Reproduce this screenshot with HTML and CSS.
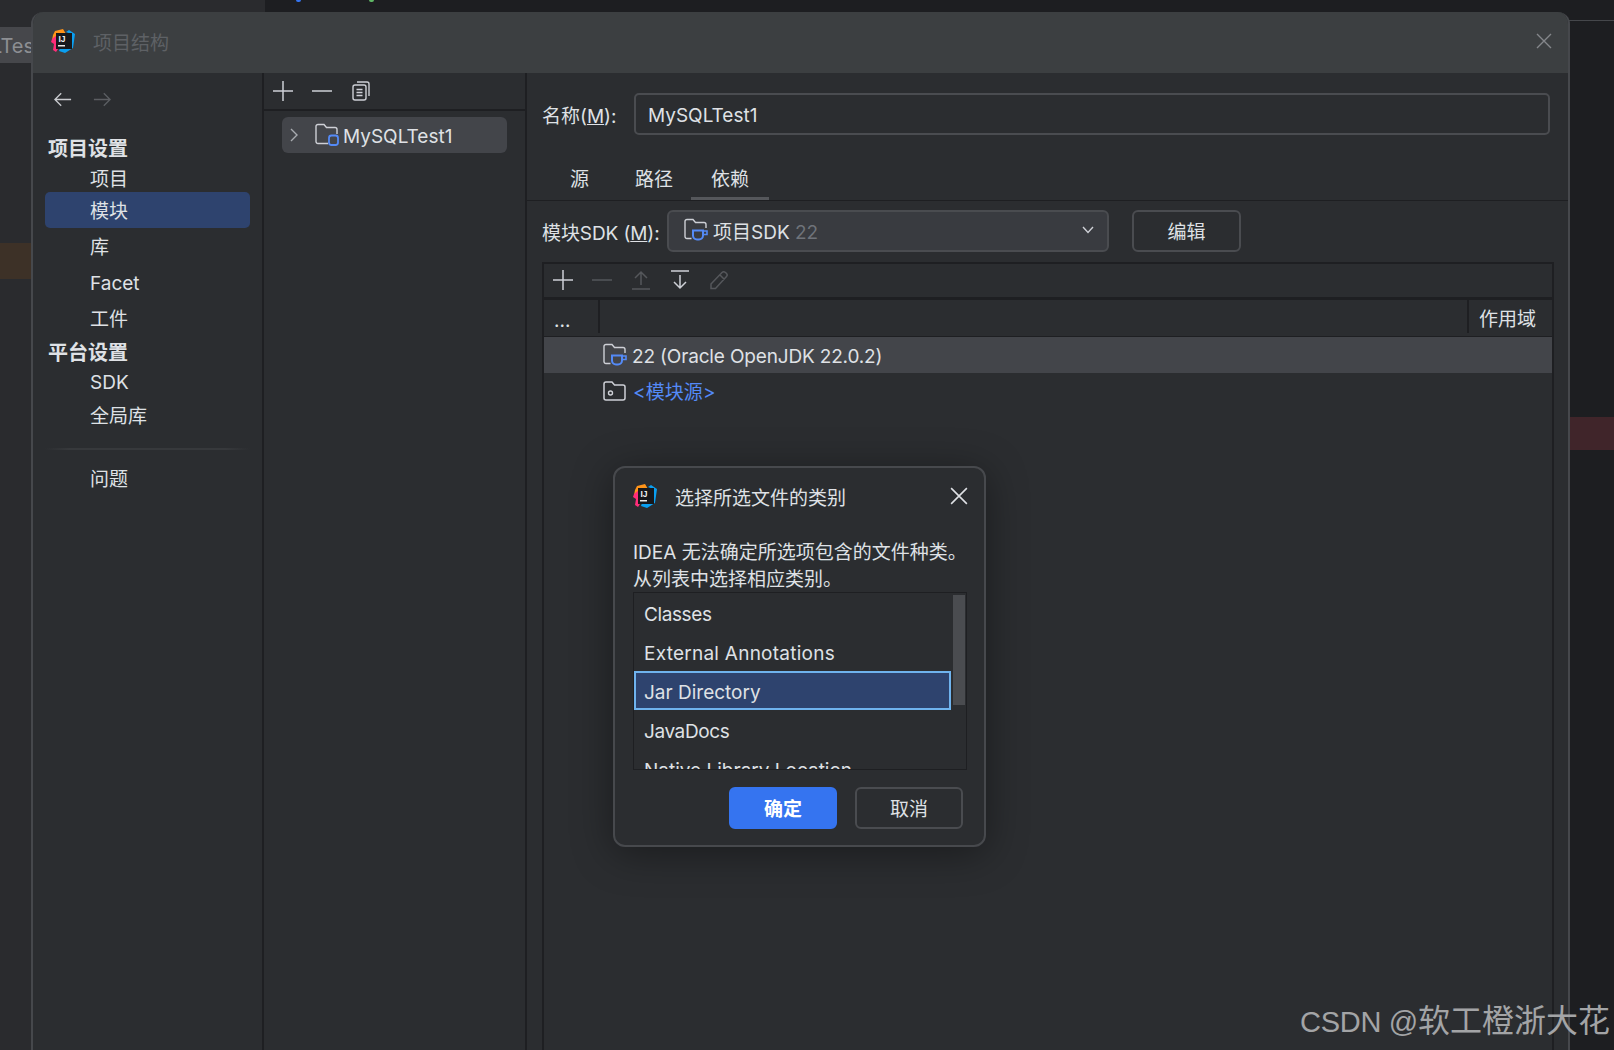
FILE: index.html
```html
<!DOCTYPE html>
<html lang="zh-CN">
<head>
<meta charset="utf-8">
<title>项目结构</title>
<link rel="stylesheet" href="styles.css">
</head>
<body>
<svg class="defs" width="0" height="0" aria-hidden="true">
  <defs>
    <symbol id="logo" viewBox="0 0 24 24">
      <polygon points="4,2 12,0 15,5 5,8 1,11 2,6" fill="#ff9419"/>
      <polygon points="1,10 6,6 7,20 5,23 2,21 3,15 0,13" fill="#ff2d78"/>
      <polygon points="15,3 18,1 24,5 22,19 14,24 8,22 9,19 20,19 20,5" fill="#0a9ff0"/>
      <rect x="5" y="4" width="16" height="16" fill="#17181b"/>
      <rect x="7" y="16" width="7" height="1.500" fill="#e8e8e8"/>
      <text x="7.500" y="12.500" class="logo-text">IJ</text>
    </symbol>
    <symbol id="plus" viewBox="0 0 20 20"><path d="M10 0V20M0 10H20" stroke="currentColor" stroke-width="1.500"/></symbol>
    <symbol id="minus" viewBox="0 0 20 20"><path d="M0 10H20" stroke="currentColor" stroke-width="1.500"/></symbol>
    <symbol id="close" viewBox="0 0 16 16"><path d="M1 1L15 15M15 1L1 15" stroke="currentColor" stroke-width="1.400"/></symbol>
    <symbol id="arrow" viewBox="0 0 20 16"><path d="M1 8H19M8 1L1 8L8 15" fill="none" stroke="currentColor" stroke-width="1.500"/></symbol>
    <symbol id="folder-jdk" viewBox="0 0 24 24">
      <path d="M7.500 20.500H3A2 2 0 0 1 1 18.500V3.500A2 2 0 0 1 3 1.500H9L11.500 4.500H20A2 2 0 0 1 22 6.500V10" fill="none" stroke="#ced0d6" stroke-width="1.400"/>
      <path d="M9 12.500H19V17.500A4 4 0 0 1 15 21.500H13A4 4 0 0 1 9 17.500Z" fill="none" stroke="#548af7" stroke-width="2"/>
      <path d="M19 13H23V16.500H18.500" fill="none" stroke="#548af7" stroke-width="1.600"/>
    </symbol>
  </defs>
</svg>

<div class="backdrop">
  <div class="backdrop-left">
    <div class="editor-tab">LTes</div>
    <div class="warn-bar"></div>
  </div>
  <div class="backdrop-right">
    <div class="backdrop-marks"><i class="mark mark-blue"></i><i class="mark mark-green"></i></div>
    <div class="backdrop-line"></div>
    <div class="error-bar"></div>
  </div>
</div>

<section class="window">
  <header class="titlebar">
    <svg class="logo"><use href="#logo"/></svg>
    <span class="window-title">项目结构</span>
    <svg class="window-close"><use href="#close"/></svg>
  </header>

  <div class="window-body">
    <nav class="nav">
      <div class="nav-history">
        <svg class="arrow"><use href="#arrow"/></svg>
        <svg class="arrow arrow-next"><use href="#arrow"/></svg>
      </div>
      <div class="nav-heading nav-heading-first">项目设置</div>
      <div class="nav-item nav-item-first">项目</div>
      <div class="nav-item nav-item-selected">模块</div>
      <div class="nav-item">库</div>
      <div class="nav-item">Facet</div>
      <div class="nav-item">工件</div>
      <div class="nav-heading">平台设置</div>
      <div class="nav-item nav-item-s">SDK</div>
      <div class="nav-item">全局库</div>
      <div class="nav-sep"></div>
      <div class="nav-item nav-item-last">问题</div>
    </nav>

    <div class="modules">
      <div class="modules-toolbar">
        <svg class="tool-icon"><use href="#plus"/></svg>
        <svg class="tool-icon"><use href="#minus"/></svg>
        <svg class="tool-icon" viewBox="0 0 20 20">
          <rect x="2" y="4" width="13" height="15" rx="2" fill="none" stroke="currentColor" stroke-width="1.400"/>
          <path d="M6 1H16A2 2 0 0 1 18 3V15" fill="none" stroke="currentColor" stroke-width="1.400"/>
          <path d="M5.500 8.500H11.500M5.500 11.500H11.500M5.500 14.500H11.500" stroke="currentColor" stroke-width="1.300"/>
        </svg>
      </div>
      <div class="tree-row">
        <svg class="chevron" viewBox="0 0 8 14"><path d="M1 1L7 7L1 13" fill="none" stroke="currentColor" stroke-width="1.400"/></svg>
        <svg class="folder" viewBox="0 0 24 24">
          <path d="M13 20.500H3A2 2 0 0 1 1 18.500V3.500A2 2 0 0 1 3 1.500H9L11.500 4.500H20A2 2 0 0 1 22 6.500V11" fill="none" stroke="#ced0d6" stroke-width="1.400"/>
          <rect x="14" y="12.500" width="9" height="9.500" rx="2.500" fill="none" stroke="#548af7" stroke-width="1.800"/>
        </svg>
        <span class="tree-label">MySQLTest1</span>
      </div>
    </div>

    <main class="detail">
      <div class="name-row">
        <label class="name-label">名称(<u>M</u>):</label>
        <div class="input">MySQLTest1</div>
      </div>

      <div class="tabs">
        <div class="tab tab-source">源</div>
        <div class="tab tab-paths">路径</div>
        <div class="tab tab-active">依赖</div>
      </div>

      <div class="sdk-row">
        <label class="sdk-label">模块SDK (<u>M</u>):</label>
        <div class="combo">
          <svg class="folder"><use href="#folder-jdk"/></svg>
          <span>项目SDK <span class="muted">22</span></span>
          <svg class="combo-arrow" viewBox="0 0 12 8"><path d="M1 1L6 6.500L11 1" fill="none" stroke="currentColor" stroke-width="1.400"/></svg>
        </div>
        <div class="btn-edit">编辑</div>
      </div>

      <div class="table">
        <div class="table-toolbar">
          <svg class="tool-icon"><use href="#plus"/></svg>
          <svg class="tool-icon tool-off"><use href="#minus"/></svg>
          <svg class="tool-icon tool-off" viewBox="0 0 20 20"><path d="M10 15V2M4 8L10 2L16 8M1 19H19" fill="none" stroke="currentColor" stroke-width="1.500"/></svg>
          <svg class="tool-icon" viewBox="0 0 20 20"><path d="M1 1H19M10 5V18M4 12L10 18L16 12" fill="none" stroke="currentColor" stroke-width="1.500"/></svg>
          <svg class="tool-icon tool-off" viewBox="0 0 20 20"><path d="M2 14L13 2.500Q14.500 1 16.500 2.500L17.500 3.500Q19 5 17.500 6.500L6.500 18.500H2ZM11 5L15.500 9.500" fill="none" stroke="currentColor" stroke-width="1.500"/></svg>
        </div>
        <div class="table-head">
          <div class="col-export">...</div>
          <div class="col-name"></div>
          <div class="col-scope">作用域</div>
        </div>
        <div class="table-row table-row-selected">
          <svg class="folder"><use href="#folder-jdk"/></svg>
          <span class="sdk-name">22 (Oracle OpenJDK 22.0.2)</span>
        </div>
        <div class="table-row">
          <svg class="folder" viewBox="0 0 24 24">
            <path d="M3 21A2 2 0 0 1 1 19V5A2 2 0 0 1 3 3H9L11.500 6H20A2 2 0 0 1 22 8V19A2 2 0 0 1 20 21Z" fill="none" stroke="currentColor" stroke-width="1.500"/>
            <circle cx="7.500" cy="14" r="2" fill="none" stroke="currentColor" stroke-width="1.400"/>
          </svg>
          <span class="link">&lt;模块源&gt;</span>
        </div>
      </div>
    </main>
  </div>
</section>

<section class="modal">
  <header class="modal-title">
    <svg class="modal-logo"><use href="#logo"/></svg>
    <span class="modal-title-text">选择所选文件的类别</span>
    <svg class="modal-close"><use href="#close"/></svg>
  </header>
  <p class="modal-text">IDEA 无法确定所选项包含的文件种类。<br>从列表中选择相应类别。</p>
  <div class="list">
    <div class="list-item track-tight">Classes</div>
    <div class="list-item track-wide">External Annotations</div>
    <div class="list-item list-item-selected">Jar Directory</div>
    <div class="list-item track-tight">JavaDocs</div>
    <div class="list-item">Native Library Location</div>
    <div class="scrollbar"></div>
  </div>
  <footer class="modal-actions">
    <div class="btn btn-primary">确定</div>
    <div class="btn">取消</div>
  </footer>
</section>

<div class="watermark"><span class="watermark-latin">CSDN @</span>软工橙浙大花</div>
</body>
</html>
```

FILE: styles.css
```css
* { box-sizing: border-box; }

html, body {
  margin: 0;
  width: 1614px;
  height: 1050px;
  overflow: hidden;
}

body {
  position: relative;
  background: #1e1f22;
  color: #dfe1e5;
  font-family: Inter, "Noto Sans CJK SC", sans-serif;
  font-size: 19px;
}

.defs { position: absolute; }
.logo-text { font: 700 8.500px "Liberation Sans", sans-serif; fill: #f0f0f0; }

/* backdrop: IDE behind the dialogs */
.backdrop {
  position: absolute;
  inset: 0;
  display: grid;
  grid-template-columns: 265px 1fr;
}
.backdrop-left { background: #2a2b2e; padding-top: 27px; }
.backdrop-right { background: #1d1e21; }
.backdrop-marks { height: 20px; display: flex; align-items: flex-start; padding-left: 31px; }
.mark { width: 5px; height: 2px; border-radius: 0 0 3px 3px; }
.mark-blue { background: #3574f0; }
.mark-green { margin-left: 68px; background: #5fb865; }
.editor-tab {
  height: 36px;
  line-height: 38px;
  width: 32px;
  background: #46474b;
  color: #8d8f93;
  font-size: 20px;
  white-space: nowrap;
  overflow: hidden;
  text-indent: -9px;
}
.warn-bar { width: 32px; height: 36px; margin-top: 180px; background: #3d3127; }
.backdrop-line { height: 1px; background: #45474b; }
.error-bar { height: 33px; margin-top: 396px; background: #40252a; }

/* project structure window */
.window {
  position: absolute;
  left: 31px;
  top: 12px;
  width: 1539px;
  height: 1060px;
  display: flex;
  flex-direction: column;
  background: #2b2d30;
  border-left: 2px solid #46484c;
  border-right: 2px solid #46484c;
  border-radius: 12px 12px 0 0;
  overflow: hidden;
}
.titlebar {
  height: 61px;
  flex: none;
  display: flex;
  align-items: center;
  padding: 0 16px 3px 18px;
  background: #3c3f41;
}
.logo { width: 24px; height: 24px; margin-right: 18px; }
.window-title { color: #5e6165; font-size: 19px; }
.window-close { width: 16px; height: 16px; margin-left: auto; color: #85878b; }

.window-body { flex: 1; display: flex; min-height: 0; }

/* left nav */
.nav {
  width: 231px;
  flex: none;
  padding: 0 12px;
  border-right: 2px solid #1e1f22;
}
.nav-history { height: 52px; display: flex; align-items: center; gap: 21px; padding-left: 9px; }
.arrow { width: 18px; height: 15px; color: #c9cbcf; }
.arrow-next { color: #5c5e62; transform: scaleX(-1); }
.nav-heading {
  height: 32px;
  line-height: 34px;
  padding-left: 3px;
  font-size: 20px;
  font-weight: 700;
}
.nav-heading-first { margin-top: 7px; }
.nav-item { height: 36px; line-height: 40px; padding-left: 45px; }
.nav-item-first { height: 28px; line-height: 32px; }
.nav-item-s { height: 29px; line-height: 29px; }
.nav-item-selected { background: #2e436e; border-radius: 5px; }
.nav-sep {
  height: 2px;
  margin-top: 15px;
  background: linear-gradient(90deg, transparent, #37393c 12%, #37393c 88%, transparent);
}
.nav-item-last { margin-top: 10px; }

/* module list */
.modules {
  width: 263px;
  flex: none;
  border-right: 2px solid #1e1f22;
}
.modules-toolbar {
  height: 38px;
  display: flex;
  align-items: center;
  gap: 19px;
  padding-left: 9px;
  border-bottom: 2px solid #1e1f22;
}
.tool-icon { width: 20px; height: 20px; color: #ced0d6; flex: none; }
.tool-off { color: #55575b; }
.tree-row {
  height: 36px;
  margin: 6px 18px 0;
  display: flex;
  align-items: center;
  padding-left: 8px;
  background: #43454a;
  border-radius: 6px;
}
.chevron { width: 8px; height: 14px; color: #a8abb0; margin-right: 17px; }
.folder { width: 24px; height: 24px; color: #ced0d6; flex: none; }
.tree-label { margin-left: 4px; padding-top: 2px; }

/* detail */
.detail { flex: 1; min-width: 0; display: flex; flex-direction: column; }
.name-row { display: flex; align-items: center; padding: 20px 18px 0 15px; }
.name-label { width: 92px; flex: none; }
.input {
  flex: 1;
  height: 42px;
  line-height: 41px;
  padding-left: 12px;
  border: 2px solid #4a4c50;
  border-radius: 5px;
}
.tabs {
  height: 47px;
  margin-top: 19px;
  display: flex;
  padding-left: 23px;
  border-bottom: 1px solid #1e1f22;
}
.tab { height: 46px; line-height: 52px; text-align: center; }
.tab-source { width: 59px; }
.tab-paths { width: 78px; margin-left: 6px; }
.tab-active { width: 78px; margin-left: -2px; border-bottom: 3px solid #55575b; }
.sdk-row { display: flex; align-items: center; padding: 9px 0 0 15px; }
.sdk-label { width: 125px; flex: none; letter-spacing: -.1px; }
.combo {
  width: 442px;
  height: 42px;
  display: flex;
  align-items: center;
  gap: 5px;
  padding: 0 13px 2px 15px;
  background: #393b40;
  border: 2px solid #4a4c50;
  border-radius: 6px;
}
.muted { color: #6f737a; }
.combo-arrow { width: 12px; height: 8px; margin-left: auto; color: #ced0d6; }
.btn-edit {
  width: 109px;
  height: 42px;
  line-height: 42px;
  margin-left: 23px;
  text-align: center;
  border: 2px solid #4a4c50;
  border-radius: 6px;
}

/* dependency table */
.table {
  flex: 1;
  margin: 10px 14px 0 15px;
  border: 2px solid #1e1f22;
  border-bottom: 0;
}
.table-toolbar {
  height: 36px;
  display: flex;
  align-items: center;
  gap: 19px;
  padding: 0 0 1px 9px;
  border-bottom: 3px solid #1e1f22;
}
.table-head {
  height: 37px;
  display: flex;
  border-bottom: 1px solid #1e1f22;
}
.col-export { width: 56px; padding-left: 10px; border-right: 2px solid #1e1f22; margin: 0 0 3px; line-height: 42px; }
.col-name { flex: 1; }
.col-scope { width: 85px; padding-left: 10px; line-height: 39px; border-left: 2px solid #1e1f22; margin: 0 0 3px; }
.table-row {
  height: 36px;
  display: flex;
  align-items: center;
  gap: 5px;
  padding-left: 59px;
}
.table-row-selected { background: #43454a; }
.sdk-name { padding-top: 2px; letter-spacing: -.16px; }
.link { color: #548af7; margin-left: 1px; padding-bottom: 2px; letter-spacing: .1px; }

/* modal */
.modal {
  position: absolute;
  left: 613px;
  top: 466px;
  width: 373px;
  height: 381px;
  padding: 0 17px 0 18px;
  background: #2b2d30;
  border: 2px solid #47494d;
  border-radius: 12px;
  box-shadow: 0 6px 40px rgba(0, 0, 0, .4);
}
.modal-title { height: 58px; padding-bottom: 2px; display: flex; align-items: center; }
.modal-logo { width: 24px; height: 24px; margin-right: 18px; }
.modal-close { width: 18px; height: 18px; margin-left: auto; margin-right: -1px; color: #dfe1e5; }
.modal-text { margin: 13px 0 -1px; line-height: 27px; white-space: nowrap; }
.list {
  position: relative;
  height: 178px;
  overflow: hidden;
  padding: 0 15px 0 0;
  border: 1px solid #1e1f22;
}
.list-item { height: 39px; line-height: 43px; padding-left: 10px; white-space: nowrap; }
.track-tight { letter-spacing: -.4px; }
.track-wide { letter-spacing: .25px; }
.list-item-selected { background: #2e436e; outline: 2px solid #6fb3ee; outline-offset: -2px; }
.scrollbar { position: absolute; top: 2px; right: 1px; width: 12px; height: 110px; background: #4a4c50; }
.modal-actions { display: flex; justify-content: flex-end; gap: 18px; margin-top: 17px; padding-right: 4px; }
.btn {
  width: 108px;
  height: 42px;
  line-height: 42px;
  text-align: center;
  border: 2px solid #4a4c50;
  border-radius: 6px;
}
.btn-primary { background: #3574f0; border-color: #3574f0; color: #fff; font-weight: 700; }

.watermark {
  position: absolute;
  right: 4px;
  top: 1001px;
  color: #a3a4a6;
  font-family: "Liberation Sans", "Noto Sans CJK SC", sans-serif;
  font-size: 32px;
  line-height: 40px;
  white-space: nowrap;
}
.watermark-latin { font-size: 29px; letter-spacing: -.3px; }
```
